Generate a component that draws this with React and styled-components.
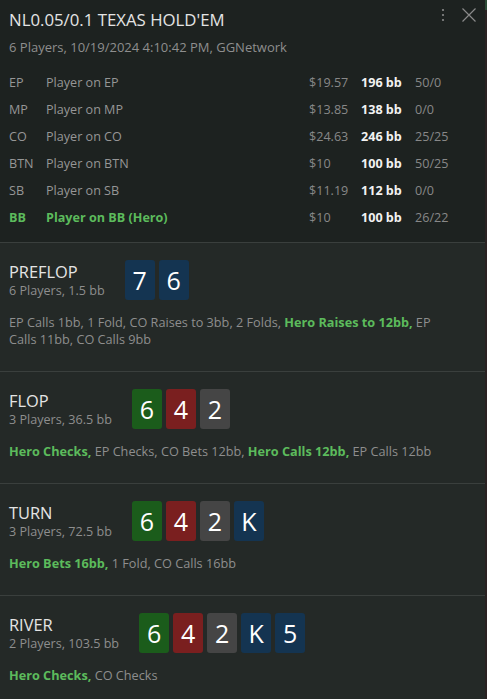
import React from 'react';
import styled, { createGlobalStyle } from 'styled-components';

const GlobalStyle = createGlobalStyle`
  html, body {
    margin: 0;
    padding: 0;
    background: #232827;
  }
  body {
    font-family: "Open Sans", "Noto Sans", sans-serif;
  }
`;

const Frame = styled.div`
  width: 487px;
  height: 699px;
  display: flex;
  overflow: hidden;
`;

const Panel = styled.div`
  flex: 1;
  display: flex;
  flex-direction: column;
  background: #242927;
`;

const Edge = styled.div`
  width: 2px;
  background: linear-gradient(#2c4a36 0, #2c4a36 10px, #2a2222 10px);
`;

const Header = styled.header`
  background: #1d2220;
  padding: 8px 9px 11px;
  border-bottom: 1px solid #3a3f3d;
`;

const TitleRow = styled.div`
  display: flex;
  align-items: flex-start;
  justify-content: space-between;
`;

const Title = styled.h1`
  margin: 0;
  font-size: 16.8px;
  font-weight: 400;
  color: #e4e4e4;
  line-height: 24px;
`;

const Tools = styled.div`
  display: flex;
  align-items: flex-start;
  gap: 17px;
  color: #8a8a8a;
`;

const Sub = styled.div`
  color: #8e8e8e;
  font-size: 13px;
  line-height: 16px;
  margin-top: 7px;
`;

const Players = styled.div`
  display: grid;
  grid-template-columns: 37px 1fr 52px 54px 61px;
  grid-auto-rows: 27px;
  align-items: center;
  margin-top: 14px;
  font-size: 12.6px;
`;

const Cell = styled.div`
  color: ${p => (p.$hero ? '#5cbb5c' : p.$tone || '#969696')};
  font-weight: ${p => (p.$hero || p.$bold ? 700 : 400)};
  white-space: nowrap;
`;

const Street = styled.section`
  padding: 16px 9px 23px;
  border-bottom: 1px solid #3a3f3d;
  &:last-child {
    border-bottom: none;
  }
`;

const StreetHead = styled.div`
  display: flex;
  align-items: center;
  gap: 20px;
`;

const StreetInfo = styled.div`
  display: flex;
  flex-direction: column;
  padding-top: 2px;
`;

const StreetName = styled.div`
  font-size: 16.4px;
  color: #e4e4e4;
  line-height: 21px;
`;

const StreetSub = styled.div`
  font-size: 12.6px;
  color: #8e8e8e;
  line-height: 18px;
`;

const Cards = styled.div`
  display: flex;
  gap: 4px;
`;

const suitColors = {
  s: '#143451',
  h: '#7a1f1f',
  c: '#1b5c1b',
  d: '#454545',
};

const Card = styled.div`
  width: 30px;
  height: 40px;
  border-radius: 3px;
  background: ${p => suitColors[p.$suit]};
  color: #ffffff;
  font-size: 25px;
  line-height: 40px;
  text-align: center;
`;

const Actions = styled.p`
  margin: 14px 0 0;
  max-width: 440px;
  font-size: 12.7px;
  line-height: 17px;
  color: #8e8e8e;
`;

const Hero = styled.span`
  color: #5cbb5c;
  font-weight: 700;
`;

const players = [
  ['EP', 'Player on EP', '$19.57', '196 bb', '50/0'],
  ['MP', 'Player on MP', '$13.85', '138 bb', '0/0'],
  ['CO', 'Player on CO', '$24.63', '246 bb', '25/25'],
  ['BTN', 'Player on BTN', '$10', '100 bb', '50/25'],
  ['SB', 'Player on SB', '$11.19', '112 bb', '0/0'],
  ['BB', 'Player on BB (Hero)', '$10', '100 bb', '26/22', true],
];

const streets = [
  {
    name: 'PREFLOP',
    sub: '6 Players, 1.5 bb',
    cards: [['7', 's'], ['6', 's']],
    actions: [
      ['EP Calls 1bb, 1 Fold, CO Raises to 3bb, 2 Folds, '],
      ['Hero Raises to 12bb,', true],
      [' EP Calls 11bb, CO Calls 9bb'],
    ],
  },
  {
    name: 'FLOP',
    sub: '3 Players, 36.5 bb',
    cards: [['6', 'c'], ['4', 'h'], ['2', 'd']],
    actions: [
      ['Hero Checks,', true],
      [' EP Checks, CO Bets 12bb, '],
      ['Hero Calls 12bb,', true],
      [' EP Calls 12bb'],
    ],
  },
  {
    name: 'TURN',
    sub: '3 Players, 72.5 bb',
    cards: [['6', 'c'], ['4', 'h'], ['2', 'd'], ['K', 's']],
    actions: [['Hero Bets 16bb,', true], [' 1 Fold, CO Calls 16bb']],
  },
  {
    name: 'RIVER',
    sub: '2 Players, 103.5 bb',
    cards: [['6', 'c'], ['4', 'h'], ['2', 'd'], ['K', 's'], ['5', 's']],
    actions: [['Hero Checks,', true], [' CO Checks']],
  },
];

const DotsIcon = () => (
  <svg width="4" height="14" viewBox="0 0 4 14" fill="currentColor">
    <circle cx="2" cy="2" r="1.1" />
    <circle cx="2" cy="7" r="1.1" />
    <circle cx="2" cy="12" r="1.1" />
  </svg>
);

const CloseIcon = () => (
  <svg width="14" height="14" viewBox="0 0 14 14" stroke="currentColor" strokeWidth="1.2" fill="none">
    <path d="M0.5 0.5 L13.5 13.5 M13.5 0.5 L0.5 13.5" />
  </svg>
);

const App = () => (
  <>
    <GlobalStyle />
    <Frame>
      <Panel>
        <Header>
          <TitleRow>
            <Title>NL0.05/0.1 TEXAS HOLD'EM</Title>
            <Tools>
              <DotsIcon />
              <CloseIcon />
            </Tools>
          </TitleRow>
          <Sub>6 Players, 10/19/2024 4:10:42 PM, GGNetwork</Sub>
          <Players>
            {players.map(([pos, name, stack, bb, stats, hero]) => (
              <React.Fragment key={pos}>
                <Cell $hero={hero}>{pos}</Cell>
                <Cell $hero={hero}>{name}</Cell>
                <Cell $tone="#888888">{stack}</Cell>
                <Cell $bold $tone="#f2f2f2">{bb}</Cell>
                <Cell $tone="#888888">{stats}</Cell>
              </React.Fragment>
            ))}
          </Players>
        </Header>
        {streets.map(street => (
          <Street key={street.name}>
            <StreetHead>
              <StreetInfo>
                <StreetName>{street.name}</StreetName>
                <StreetSub>{street.sub}</StreetSub>
              </StreetInfo>
              <Cards>
                {street.cards.map(([rank, suit], i) => (
                  <Card key={i} $suit={suit}>{rank}</Card>
                ))}
              </Cards>
            </StreetHead>
            <Actions>
              {street.actions.map(([text, hero], i) =>
                hero ? <Hero key={i}>{text}</Hero> : <React.Fragment key={i}>{text}</React.Fragment>
              )}
            </Actions>
          </Street>
        ))}
      </Panel>
      <Edge />
    </Frame>
  </>
);

export default App;
